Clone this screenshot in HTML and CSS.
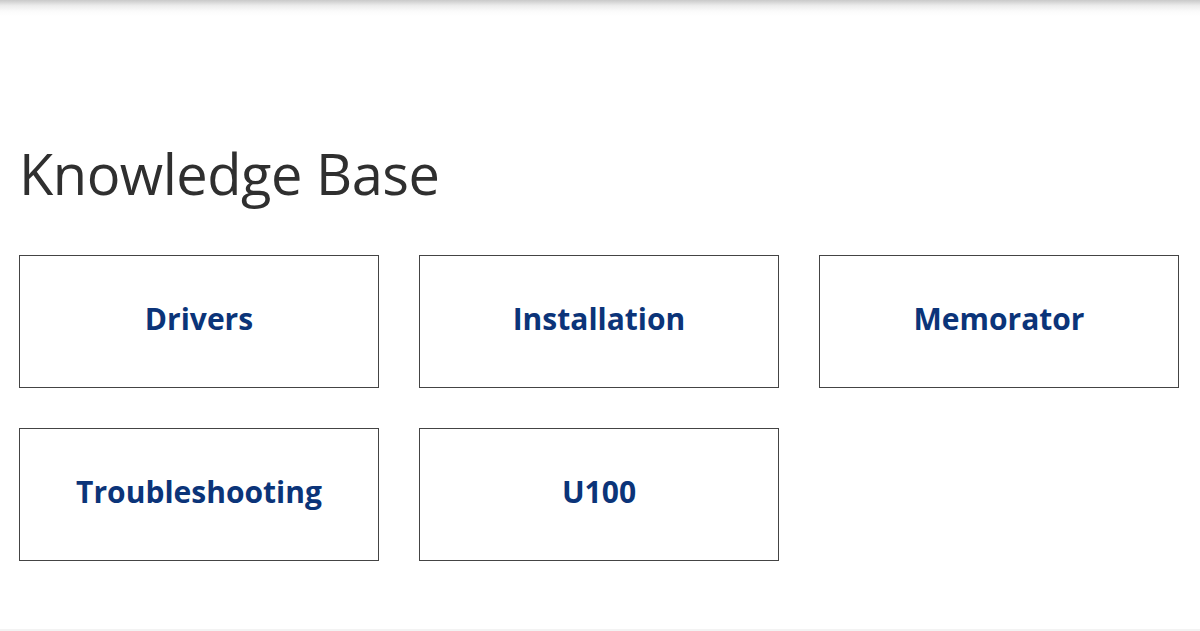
FILE: index.html
```html
<!DOCTYPE html>
<html lang="en">
<head>
  <meta charset="UTF-8" />
  <title>Knowledge Base</title>
  <link rel="stylesheet" href="styles.css">
</head>
<body>
  <div class="top-shade"></div>

  <main class="kb">
    <h1>Knowledge Base</h1>

    <div class="kb-grid">
      <a class="kb-card" href="#">Drivers</a>
      <a class="kb-card" href="#">Installation</a>
      <a class="kb-card" href="#">Memorator</a>
      <a class="kb-card" href="#">Troubleshooting</a>
      <a class="kb-card" href="#">U100</a>
    </div>
  </main>

  <div class="bottom-bar"></div>
</body>
</html>
```

FILE: styles.css
```css
html, body {
  height: 100%;
}

body {
  margin: 0;
  background: #fff;
  font-family: 'Open Sans', sans-serif;
  display: flex;
  flex-direction: column;
  overflow: hidden;
}

.top-shade {
  height: 16px;
  background: linear-gradient(to bottom, #c9c9c9 0%, #ececec 35%, #fbfbfb 70%, #fff 100%);
}

.kb {
  flex: 1;
  padding: 122px 19px 0;
}

.kb h1 {
  margin: 0 0 47px;
  font-size: 56px;
  font-weight: 400;
  line-height: 70px;
  color: #2f2f2f;
  letter-spacing: -0.5px;
}

.kb-grid {
  display: grid;
  grid-template-columns: repeat(3, 360px);
  grid-auto-rows: 133px;
  gap: 40px 40px;
}

.kb-card {
  display: flex;
  align-items: center;
  justify-content: center;
  padding-bottom: 6px;
  border: 1px solid #444;
  color: #0b3479;
  font-size: 30px;
  font-weight: 700;
  text-decoration: none;
}

.bottom-bar {
  height: 2px;
  background: #f3f3f3;
}
```
